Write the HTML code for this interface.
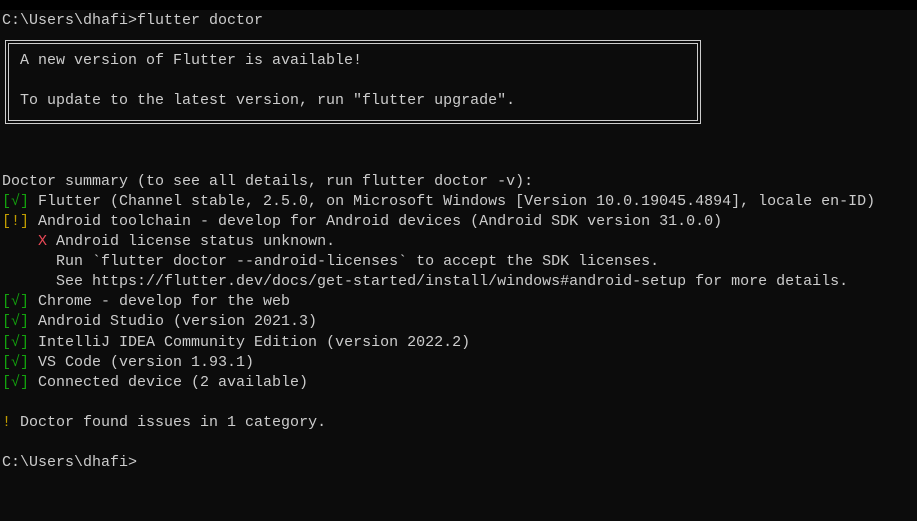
<!DOCTYPE html>
<html><head><style>
html,body{margin:0;padding:0;background:#0c0c0c;width:917px;height:521px;overflow:hidden}
.t{position:absolute;left:2px;top:11px;font-family:"Liberation Mono",monospace;font-size:15px;line-height:20.1px;color:#cccccc;white-space:pre}
.g{color:#13a10e}.y{color:#c19c00}.r{color:#e74856}
.box{position:absolute;left:5px;top:40px;width:688px;height:76px;border:4px double #cccccc}
.top{position:absolute;left:0;top:0;width:917px;height:10px;background:#000}
</style></head><body>
<div class="top"></div>
<div class="box"></div>
<div class="t">C:\Users\dhafi&gt;flutter doctor

  A new version of Flutter is available!

  To update to the latest version, run "flutter upgrade".



Doctor summary (to see all details, run flutter doctor -v):
<span class="g">[√]</span> Flutter (Channel stable, 2.5.0, on Microsoft Windows [Version 10.0.19045.4894], locale en-ID)
<span class="y">[!]</span> Android toolchain - develop for Android devices (Android SDK version 31.0.0)
    <span class="r">X</span> Android license status unknown.
      Run `flutter doctor --android-licenses` to accept the SDK licenses.
      See https://flutter.dev/docs/get-started/install/windows#android-setup for more details.
<span class="g">[√]</span> Chrome - develop for the web
<span class="g">[√]</span> Android Studio (version 2021.3)
<span class="g">[√]</span> IntelliJ IDEA Community Edition (version 2022.2)
<span class="g">[√]</span> VS Code (version 1.93.1)
<span class="g">[√]</span> Connected device (2 available)

<span class="y">!</span> Doctor found issues in 1 category.

C:\Users\dhafi&gt;</div>
</body></html>
